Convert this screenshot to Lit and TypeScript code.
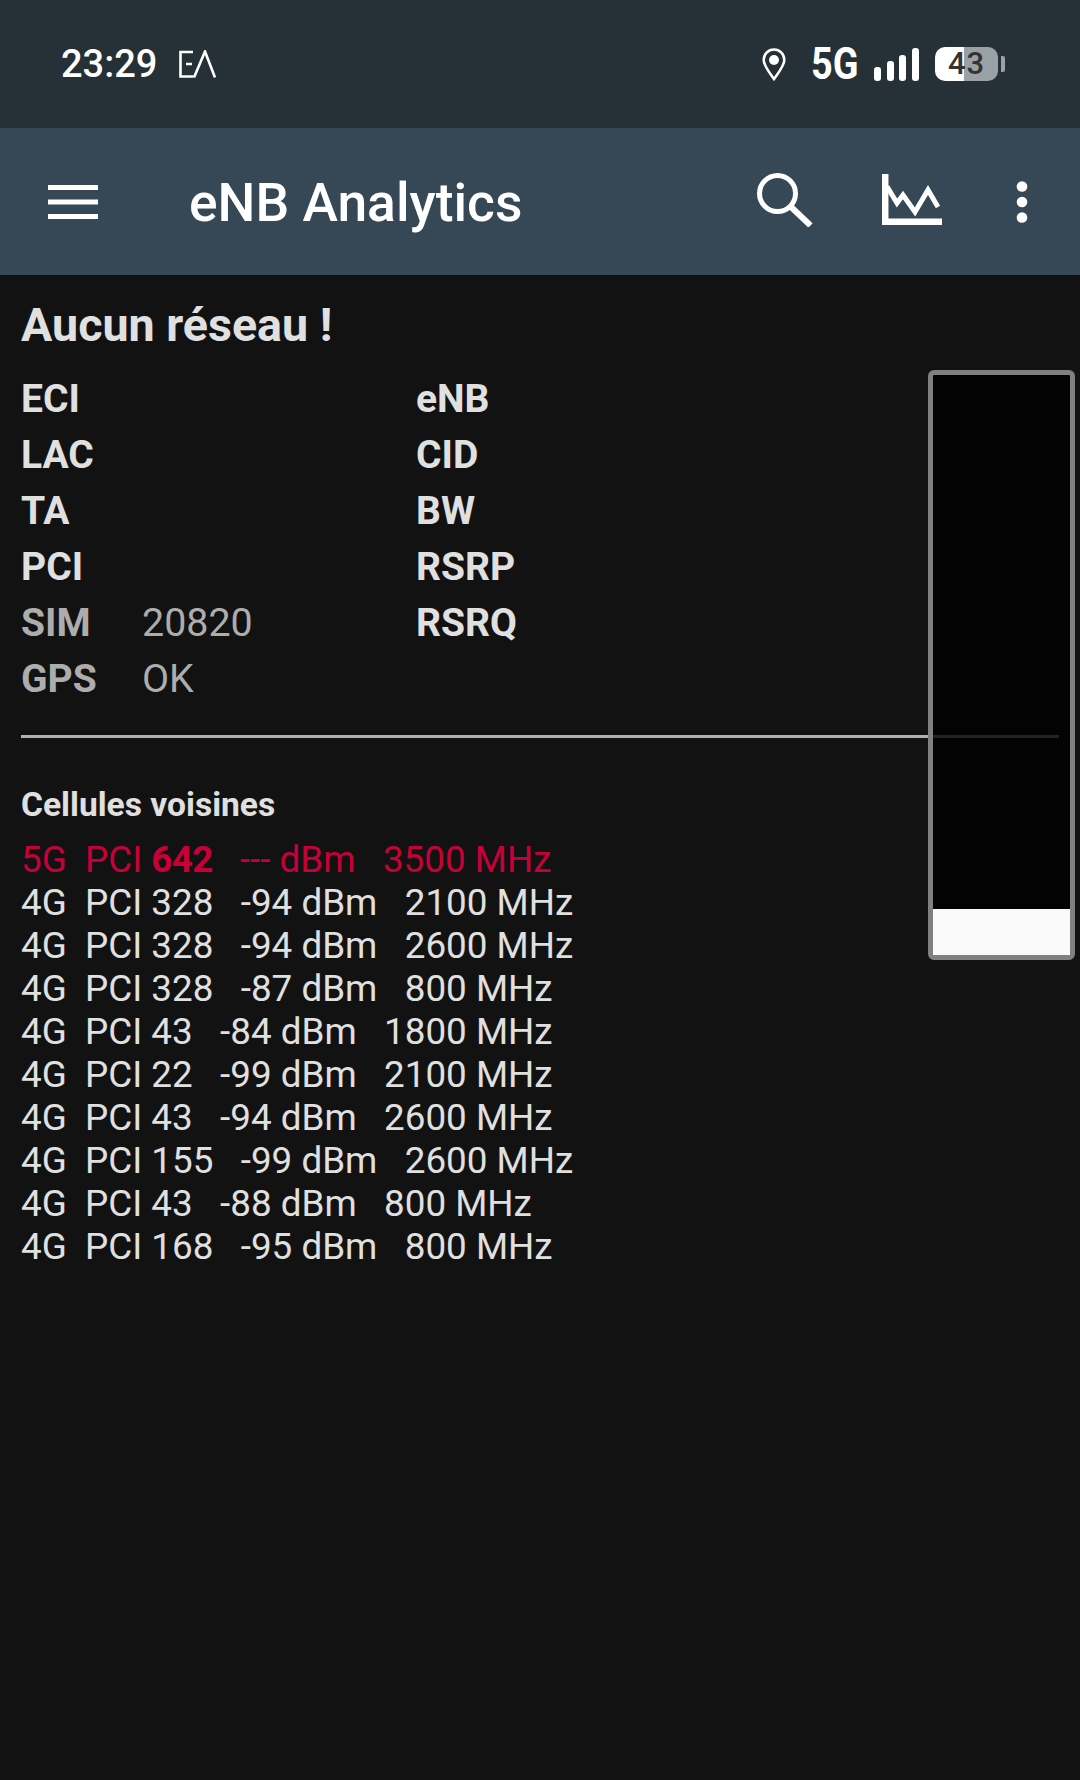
import { LitElement, html, css } from "lit";
import { customElement } from "lit/decorators.js";

const fields = [
  ["ECI", "", "eNB"],
  ["LAC", "", "CID"],
  ["TA", "", "BW"],
  ["PCI", "", "RSRP"],
  ["SIM", "20820", "RSRQ"],
  ["GPS", "OK", ""],
];

const cells = [
  "4G  PCI 328   -94 dBm   2100 MHz",
  "4G  PCI 328   -94 dBm   2600 MHz",
  "4G  PCI 328   -87 dBm   800 MHz",
  "4G  PCI 43   -84 dBm   1800 MHz",
  "4G  PCI 22   -99 dBm   2100 MHz",
  "4G  PCI 43   -94 dBm   2600 MHz",
  "4G  PCI 155   -99 dBm   2600 MHz",
  "4G  PCI 43   -88 dBm   800 MHz",
  "4G  PCI 168   -95 dBm   800 MHz",
];

@customElement("app-root")
export class AppRoot extends LitElement {
  static styles = css`
    :host {
      display: block;
      width: 1080px;
      height: 1780px;
      position: relative;
      overflow: hidden;
      background: #121212;
      font-family: Roboto, sans-serif;
      color: #e0e0e0;
    }

    svg {
      display: block;
      flex: none;
    }

    .status {
      height: 128px;
      box-sizing: border-box;
      padding: 0 75px 0 61px;
      background: #263137;
      color: #fff;
      display: flex;
      align-items: center;
      justify-content: space-between;
    }

    .status-left,
    .status-right {
      display: flex;
      align-items: center;
    }

    .time {
      font-size: 38px;
      font-weight: 500;
      line-height: 40px;
      width: 118px;
    }

    .pin {
      margin-right: 25px;
    }

    .net {
      font-size: 45px;
      font-weight: 700;
      line-height: 40px;
      width: 47px;
      margin-right: 16px;
      transform: scaleX(0.84);
      transform-origin: left center;
    }

    .battery {
      width: 63px;
      height: 34px;
      margin-left: 16px;
      border-radius: 10px;
      background: linear-gradient(to right, #fff 46%, #9aa0a3 46%);
      color: #333;
      font-size: 31px;
      font-weight: 500;
      line-height: 34px;
      text-align: center;
      letter-spacing: 1px;
    }

    .nub {
      width: 4px;
      height: 16px;
      margin-left: 3px;
      border-radius: 0 2px 2px 0;
      background: #9aa0a3;
    }

    .toolbar {
      height: 147px;
      box-sizing: border-box;
      padding-left: 48px;
      background: #364756;
      color: #fff;
      display: flex;
      align-items: center;
    }

    .title {
      font-size: 53.4px;
      font-weight: 500;
      line-height: 62px;
      margin: 2px 0 0 91px;
      flex: 1;
    }

    .search {
      margin: 0 69px 4px 0;
    }

    .chart {
      margin: 0 74px 4px 0;
    }

    .dots {
      margin-right: 52px;
    }

    main {
      padding: 22px 21px 0;
    }

    h1 {
      margin: 0 0 17.5px;
      font-size: 46.6px;
      font-weight: 700;
      line-height: 56px;
    }

    .fields {
      display: grid;
      grid-template-columns: 121px 274px 1fr;
      grid-auto-rows: 56px;
      font-size: 39.4px;
      line-height: 56px;
    }

    .fields b {
      font-size: 39px;
      font-weight: 700;
    }

    .dim {
      color: #adadad;
    }

    hr {
      height: 3px;
      margin: 28.5px 0 46.6px;
      border: 0;
      background: #b0b0b0;
    }

    h2 {
      margin: 0 0 13.4px;
      font-size: 33.6px;
      font-weight: 700;
      line-height: 40px;
    }

    .cell {
      font-size: 36.8px;
      line-height: 43px;
      white-space: pre;
    }

    .cell.active {
      color: #c70039;
    }

    .cell.active b {
      letter-spacing: -0.7px;
    }

    .gauge {
      position: absolute;
      left: 928px;
      top: 370px;
      width: 147px;
      height: 590px;
      box-sizing: border-box;
      border: 5px solid #808080;
      border-radius: 6px;
      background: rgba(0, 0, 0, 0.8);
      display: flex;
      flex-direction: column;
      justify-content: flex-end;
    }

    .level {
      height: 46px;
      background: #fafafa;
    }
  `;

  render() {
    return html`
      <div class="status">
        <div class="status-left">
          <span class="time">23:29</span>
          <svg width="37" height="28" viewBox="0 0 37 28" fill="none" stroke="#fff" stroke-width="2.600">
            <path d="M14 2H1.500V26.500H14.500M7 14H13" />
            <path d="M15 27.500L26 1.500L36 27.500" />
          </svg>
        </div>
        <div class="status-right">
          <svg class="pin" width="24" height="33" viewBox="0 0 24 33">
            <path d="M12 1.500C6 1.500 1.700 6.200 1.700 12C1.700 18 8 25 12 31C16 25 22.300 18 22.300 12C22.300 6.200 18 1.500 12 1.500Z" fill="none" stroke="#fff" stroke-width="2.500" />
            <circle cx="12" cy="12" r="5" fill="#fff" />
          </svg>
          <span class="net">5G</span>
          <svg width="45" height="33" viewBox="0 0 45 33" fill="#fff">
            <rect x="0" y="19" width="7" height="14" rx="3" />
            <rect x="13" y="13" width="7" height="20" rx="3" />
            <rect x="25" y="7" width="7" height="26" rx="3" />
            <rect x="38" y="0" width="7" height="33" rx="3" />
          </svg>
          <div class="battery">43</div>
          <div class="nub"></div>
        </div>
      </div>

      <div class="toolbar">
        <svg width="50" height="34" viewBox="0 0 50 34" fill="#fff">
          <rect y="0" width="50" height="5" />
          <rect y="14.500" width="50" height="5" />
          <rect y="29" width="50" height="5" />
        </svg>
        <div class="title">eNB Analytics</div>
        <svg class="search" width="56" height="54" viewBox="0 0 56 54" fill="none" stroke="#fff" stroke-width="5">
          <circle cx="20.500" cy="20.500" r="18" />
          <path d="M33 33L53.500 52.500" stroke-width="6" />
        </svg>
        <svg class="chart" width="60" height="51" viewBox="0 0 60 51" fill="none" stroke="#fff">
          <path d="M3.200 0V47.800H60" stroke-width="6.500" />
          <path d="M5 12.500L15 29L21 21L33 38L46 16L56 33" stroke-width="5" />
        </svg>
        <svg class="dots" width="12" height="42" viewBox="0 0 12 42" fill="#fff">
          <circle cx="6" cy="5.500" r="5.300" />
          <circle cx="6" cy="21" r="5.300" />
          <circle cx="6" cy="36.500" r="5.300" />
        </svg>
      </div>

      <main>
        <h1>Aucun réseau !</h1>
        <div class="fields">
          ${fields.map(
            ([label, value, right], i) => html`
              <b class=${i > 3 ? "dim" : ""}>${label}</b>
              <span class="dim">${value}</span>
              <b>${right}</b>
            `
          )}
        </div>
        <hr />
        <h2>Cellules voisines</h2>
        <div class="cell active">5G  PCI <b>642</b>   --- dBm   3500 MHz</div>
        ${cells.map((c) => html`<div class="cell">${c}</div>`)}
      </main>

      <div class="gauge"><div class="level"></div></div>
    `;
  }
}
